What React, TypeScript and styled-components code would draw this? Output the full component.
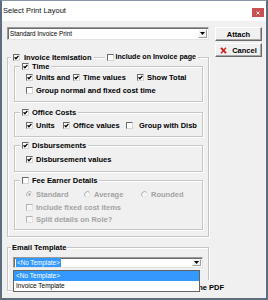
import React from "react";
import styled, { createGlobalStyle } from "styled-components";

const Global = createGlobalStyle`
  html, body { margin: 0; padding: 0; background: #fff; }
  body { font-family: "Liberation Sans", Arial, sans-serif; }
  * { box-sizing: border-box; }
`;

const Window = styled.div`
  width: 268px;
  height: 300px;
  display: flex;
  flex-direction: column;
  background: #f0f0f0;
  border: 2px solid #5b6d7f;
  border-top: 1px solid #8898a8;
  overflow: hidden;
`;

const TitleBar = styled.div`
  height: 20px;
  flex: none;
  background: #fff;
  display: flex;
  align-items: flex-start;
  justify-content: space-between;
  padding-left: 1px;
`;

const Title = styled.div`
  font-size: 7.5px;
  line-height: 9px;
  margin-top: 5px;
  color: #111;
`;

const CloseBtn = styled.div`
  width: 12px;
  height: 9px;
  margin-top: 7px;
  margin-right: 2px;
  background: #c75050;
  display: flex;
  align-items: center;
  justify-content: center;
`;

const Body = styled.div`
  flex: 1;
  display: flex;
  gap: 6px;
  padding: 6px 4px 0 5px;
`;

const LeftCol = styled.div`
  width: 202px;
  display: flex;
  flex-direction: column;
`;

const RightCol = styled.div`
  width: 47px;
  display: flex;
  flex-direction: column;
  gap: 2px;
`;

const Btn = styled.button`
  width: 47px;
  height: 14px;
  padding: 0;
  display: flex;
  align-items: center;
  justify-content: center;
  gap: 5px;
  font-family: inherit;
  font-size: 7.5px;
  font-weight: bold;
  color: #000;
  background: #f0f0f0;
  border: 1px solid;
  border-color: #fff #696969 #696969 #fff;
  box-shadow: inset -1px -1px 0 #a8a8a8;
`;

const ComboWrap = styled.div`
  position: relative;
`;

const Combo = styled.div<{ $h: number }>`
  height: ${(p) => p.$h}px;
  background: #fff;
  border: 1px solid;
  border-color: #9a9a9a #e3e3e3 #e3e3e3 #9a9a9a;
  box-shadow: inset 1px 1px 0 #6e6e6e;
  display: flex;
  align-items: stretch;
  font-size: 6.3px;
  color: #000;
`;

const ComboValue = styled.div`
  flex: 1;
  display: flex;
  align-items: center;
  padding-left: 2px;
  white-space: nowrap;
`;

const Highlight = styled.span`
  background: #3399ff;
  color: #fff;
  line-height: 9px;
  padding: 0 1px;
`;

const ArrowBox = styled.div`
  width: 9px;
  margin: 1px 1px 1px 0;
  display: flex;
  align-items: center;
  justify-content: center;
  background: #f0f0f0;
  border: 1px solid;
  border-color: #fff #a0a0a0 #a0a0a0 #fff;
`;

const DropList = styled.div`
  position: absolute;
  left: 0;
  top: 13px;
  width: 187px;
  background: #fff;
  border: 1px solid #646464;
  z-index: 2;
`;

const DropItem = styled.div<{ $sel?: boolean }>`
  height: 10px;
  line-height: 10px;
  padding-left: 2px;
  font-size: 6.5px;
  white-space: nowrap;
  background: ${(p) => (p.$sel ? "#3399ff" : "#fff")};
  color: ${(p) => (p.$sel ? "#fff" : "#000")};
`;

const Group = styled.fieldset<{
  $mt: number;
  $pt: number;
  $pb: number;
  $pl: number;
  $pr: number;
}>`
  margin: ${(p) => p.$mt}px 0 0 0;
  padding: ${(p) => `${p.$pt}px ${p.$pr}px ${p.$pb}px ${p.$pl}px`};
  border: 1px solid #c6c6c6;
  box-shadow: inset 1px 1px 0 #fff, 1px 1px 0 #fff;
  min-width: 0;
`;

const Legend = styled.legend<{ $ml: number; $px: number }>`
  margin-left: ${(p) => p.$ml}px;
  padding: 0 ${(p) => p.$px}px;
  height: 7px;
  line-height: 7px;
  display: flex;
  align-items: center;
  background: #f0f0f0;
`;

const LegendLine = styled.div`
  align-self: flex-start;
  width: 11px;
  margin: 3px 2px 0 2px;
  height: 2px;
  border-top: 1px solid #c6c6c6;
  border-bottom: 1px solid #fff;
`;

const LegendText = styled.span<{ $fs?: number }>`
  font-size: ${(p) => p.$fs ?? 7.5}px;
  line-height: 7px;
  font-weight: bold;
  color: #000;
  white-space: nowrap;
`;

const Row = styled.div<{ $h: number }>`
  height: ${(p) => p.$h}px;
  display: flex;
  align-items: center;
`;

const Opt = styled.label<{ $w?: number; $gap: number; $disabled?: boolean }>`
  display: flex;
  align-items: center;
  gap: ${(p) => p.$gap}px;
  width: ${(p) => (p.$w ? `${p.$w}px` : "auto")};
  flex: none;
  font-size: 7.5px;
  line-height: 9px;
  font-weight: bold;
  white-space: nowrap;
  color: ${(p) => (p.$disabled ? "#a3a3a3" : "#000")};
`;

const Box = styled.span<{ $disabled?: boolean }>`
  width: 7px;
  height: 7px;
  flex: none;
  border: 1px solid;
  border-color: ${(p) =>
    p.$disabled ? "#b4b4b4 #e2e2e2 #e2e2e2 #b4b4b4" : "#6a6a6a #d6d6d6 #d6d6d6 #6a6a6a"};
  background: ${(p) => (p.$disabled ? "#f6f6f6" : "#fff")};
  display: flex;
  align-items: center;
  justify-content: center;
`;

const PdfRow = styled.div`
  height: 14px;
  margin: 12px -21px -4px 0;
  display: flex;
  align-items: center;
  justify-content: flex-end;
  background: #f0f0f0;
`;

const Check = ({ checked, disabled }: { checked?: boolean; disabled?: boolean }) => (
  <Box $disabled={disabled}>
    {checked && (
      <svg width="5" height="5" viewBox="0 0 5 5">
        <path d="M0.6 2.3 L1.9 3.7 L4.4 0.8" fill="none" stroke="#000" strokeWidth="1.3" />
      </svg>
    )}
  </Box>
);

const Radio = ({ checked }: { checked?: boolean }) => (
  <svg width="7" height="7" viewBox="0 0 7 7" style={{ flex: "none" }}>
    <circle cx="3.5" cy="3.5" r="3" fill="#f6f6f6" />
    <path d="M1.38 5.62 A3 3 0 0 1 5.62 1.38" fill="none" stroke="#a8a8a8" strokeWidth="1" />
    <path d="M5.62 1.38 A3 3 0 0 1 1.38 5.62" fill="none" stroke="#e4e4e4" strokeWidth="1" />
    {checked && <circle cx="3.5" cy="3.5" r="1.2" fill="#a3a3a3" />}
  </svg>
);

type OptProps = {
  label: string;
  checked?: boolean;
  disabled?: boolean;
  radio?: boolean;
  w?: number;
  gap?: number;
};

const Option = ({ label, checked, disabled, radio, w, gap = 3 }: OptProps) => (
  <Opt $w={w} $gap={gap} $disabled={disabled}>
    {radio ? <Radio checked={checked} /> : <Check checked={checked} disabled={disabled} />}
    <span>{label}</span>
  </Opt>
);

const LegendCheck = ({
  label,
  checked,
  gap = 3,
  fs,
}: {
  label: string;
  checked?: boolean;
  gap?: number;
  fs?: number;
}) => (
  <Opt $gap={gap}>
    <Check checked={checked} />
    <LegendText $fs={fs}>{label}</LegendText>
  </Opt>
);

const DownArrow = () => (
  <svg width="5" height="3" viewBox="0 0 5 3">
    <polygon points="0,0 5,0 2.5,3" fill="#000" />
  </svg>
);

const RedX = () => (
  <svg width="7" height="7" viewBox="0 0 7 7">
    <path d="M1 0.8 L6 6.2" stroke="#d21f1a" strokeWidth="1.9" />
    <path d="M6 0.8 L1 6.2" stroke="#d21f1a" strokeWidth="1.4" />
  </svg>
);

export default function App() {
  return (
    <>
      <Global />
      <Window>
        <TitleBar>
          <Title>Select Print Layout</Title>
          <CloseBtn>
            <svg width="4" height="4" viewBox="0 0 4 4">
              <path d="M0.5 0.5 L3.5 3.5 M3.5 0.5 L0.5 3.5" stroke="#fff" strokeWidth="0.9" />
            </svg>
          </CloseBtn>
        </TitleBar>
        <Body>
          <LeftCol>
            <Combo $h={13}>
              <ComboValue>Standard Invoice Print</ComboValue>
              <ArrowBox>
                <DownArrow />
              </ArrowBox>
            </Combo>

            <Group $mt={14} $pt={2} $pb={6} $pl={6} $pr={5}>
              <Legend $ml={-3} $px={2}>
                <LegendCheck label="Invoice Itemisation" checked gap={4} />
                <LegendLine />
                <LegendCheck label="Include on Invoice page" gap={2} fs={7.1} />
              </Legend>

              <Group $mt={0} $pt={1} $pb={4} $pl={11} $pr={4}>
                <Legend $ml={-6} $px={2}>
                  <LegendCheck label="Time" checked />
                </Legend>
                <Row $h={13}>
                  <Option label="Units and" checked w={47} />
                  <Option label="Time values" checked w={64} />
                  <Option label="Show Total" checked />
                </Row>
                <Row $h={13}>
                  <Option label="Group normal and fixed cost time" />
                </Row>
              </Group>

              <Group $mt={7} $pt={3} $pb={4} $pl={11} $pr={4}>
                <Legend $ml={-6} $px={2}>
                  <LegendCheck label="Office Costs" checked />
                </Legend>
                <Row $h={13}>
                  <Option label="Units" checked w={37} />
                  <Option label="Office values" checked w={63} />
                  <Option label="Group with Disb" gap={6} />
                </Row>
              </Group>

              <Group $mt={5} $pt={4} $pb={5} $pl={11} $pr={4}>
                <Legend $ml={-6} $px={2}>
                  <LegendCheck label="Disbursements" checked />
                </Legend>
                <Row $h={13}>
                  <Option label="Disbursement values" checked />
                </Row>
              </Group>

              <Group $mt={5} $pt={4} $pb={4} $pl={11} $pr={4}>
                <Legend $ml={-6} $px={2}>
                  <LegendCheck label="Fee Earner Details" />
                </Legend>
                <Row $h={13}>
                  <Option label="Standard" radio checked disabled w={58} />
                  <Option label="Average" radio disabled w={57} />
                  <Option label="Rounded" radio disabled />
                </Row>
                <Row $h={12}>
                  <Option label="Include fixed cost items" disabled />
                </Row>
                <Row $h={12}>
                  <Option label="Split details on Role?" disabled />
                </Row>
              </Group>
            </Group>

            <Group $mt={7} $pt={6} $pb={0} $pl={5} $pr={5}>
              <Legend $ml={-2} $px={1}>
                <LegendText>Email Template</LegendText>
              </Legend>
              <ComboWrap>
                <Combo $h={11}>
                  <ComboValue>
                    <Highlight>&lt;No Template&gt;</Highlight>
                  </ComboValue>
                  <ArrowBox>
                    <DownArrow />
                  </ArrowBox>
                </Combo>
                <DropList>
                  <DropItem $sel>&lt;No Template&gt;</DropItem>
                  <DropItem>Invoice Template</DropItem>
                </DropList>
              </ComboWrap>
              <PdfRow>
                <Option label="Attach as one PDF" />
              </PdfRow>
            </Group>
          </LeftCol>

          <RightCol>
            <Btn>Attach</Btn>
            <Btn>
              <RedX />
              Cancel
            </Btn>
          </RightCol>
        </Body>
      </Window>
    </>
  );
}
